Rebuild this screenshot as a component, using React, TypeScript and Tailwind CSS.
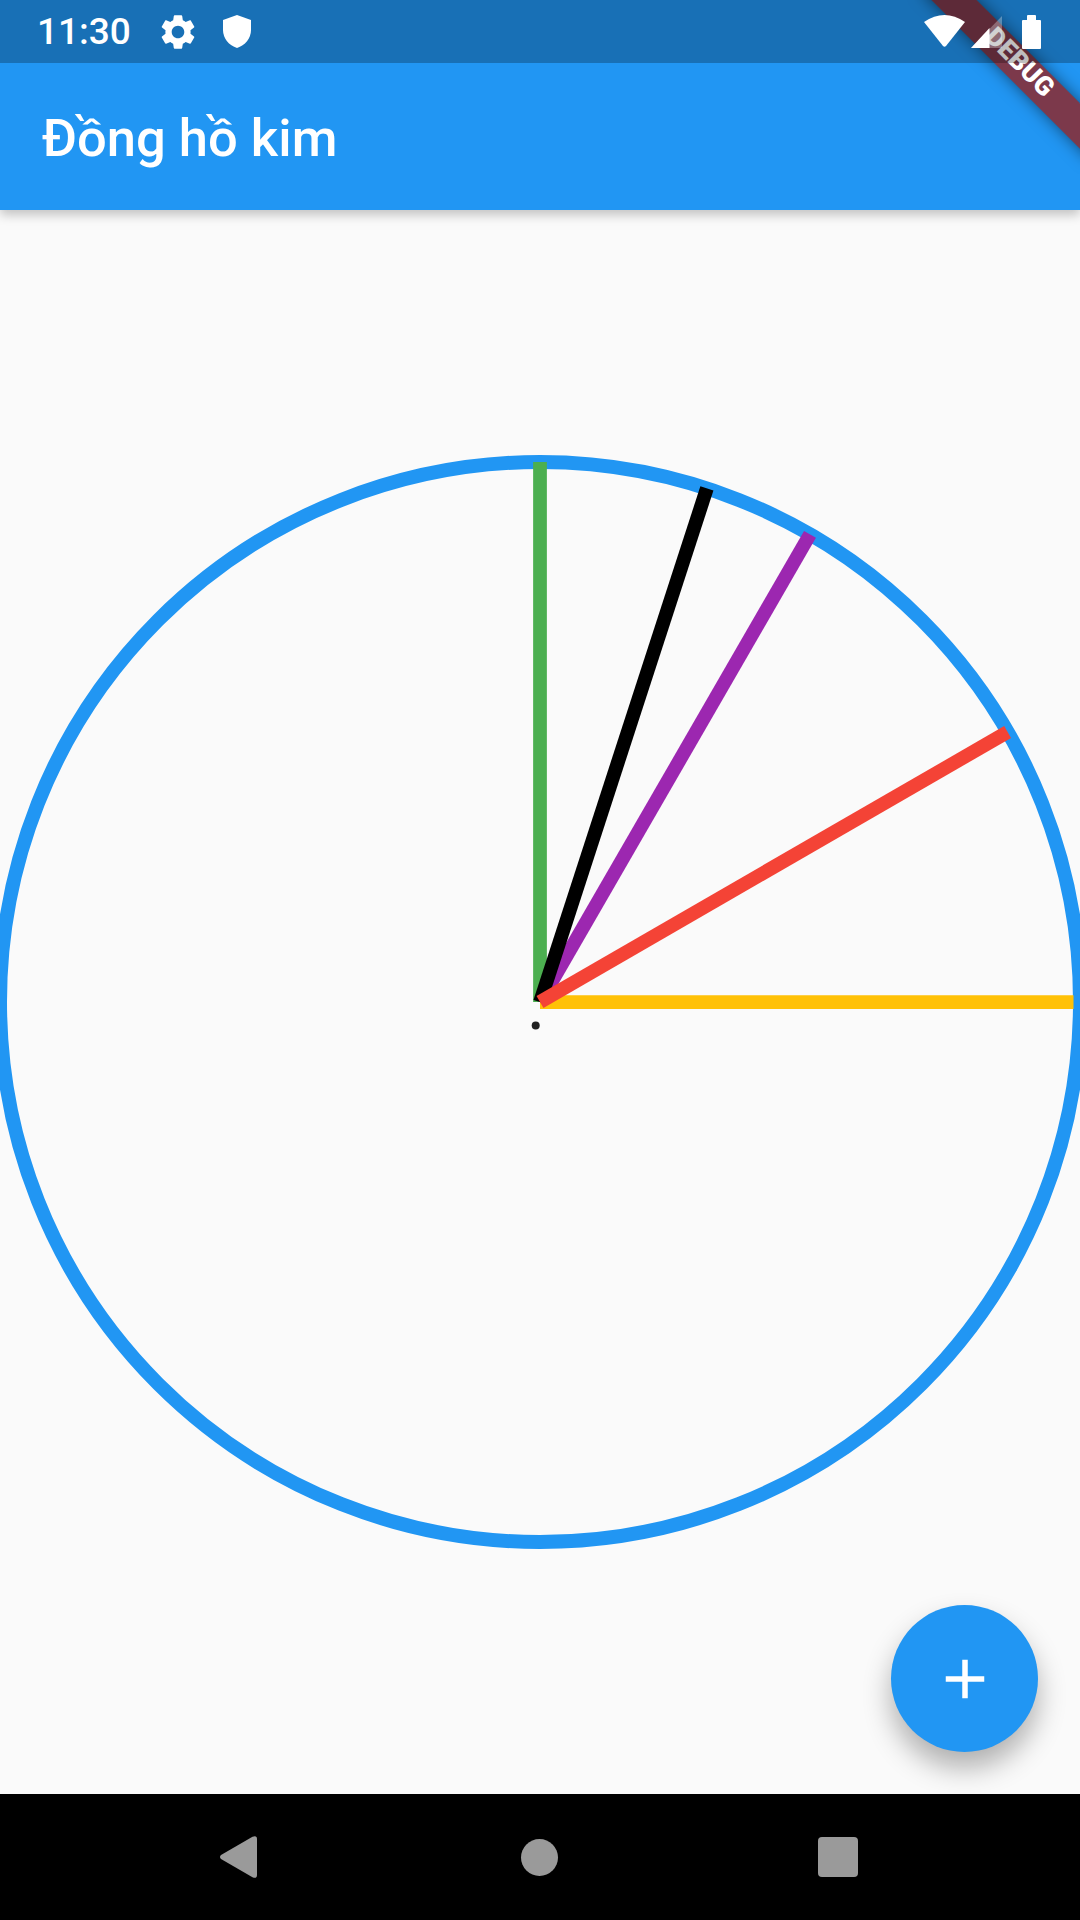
const hands = [
  { color: "#4CAF50", x: 540, y: 7 },
  { color: "#FFC107", x: 1073.5, y: 547 },
  { color: "#9C27B0", x: 810, y: 79.4 },
  { color: "#000000", x: 706.9, y: 33.4 },
  { color: "#F44336", x: 1007.6, y: 277 },
];

function ClockFace() {
  return (
    <svg width="1080" height="1094" viewBox="0 0 1080 1094" className="shrink-0">
      <circle cx="540" cy="547" r="540" fill="none" stroke="#2196F3" strokeWidth="14" />
      {hands.map((hand) => (
        <line
          key={hand.color}
          x1="540"
          y1="547"
          x2={hand.x}
          y2={hand.y}
          stroke={hand.color}
          strokeWidth="13.75"
        />
      ))}
      <circle cx="535.7" cy="570.5" r="4" fill="#212121" />
    </svg>
  );
}

// system status bar sits over the app, so the debug ribbon goes under it
function StatusBar() {
  return (
    <div className="absolute inset-x-0 top-0 z-30 flex h-[63px] items-center bg-black/25 pl-[37px] pr-[39px] text-white">
      <span className="text-[37px] font-medium leading-none">11:30</span>
      <svg width="42" height="42" viewBox="0 0 24 24" fill="white" className="ml-[26px]">
        <path d="M19.14 12.94c.04-.3.06-.61.06-.94 0-.32-.02-.64-.07-.94l2.03-1.58c.18-.14.23-.41.12-.61l-1.92-3.32c-.12-.22-.37-.29-.59-.22l-2.39.96c-.5-.38-1.03-.7-1.62-.94l-.36-2.54c-.04-.24-.24-.41-.48-.41h-3.84c-.24 0-.43.17-.47.41l-.36 2.54c-.59.24-1.13.57-1.62.94l-2.39-.96c-.22-.08-.47 0-.59.22L2.74 8.87c-.12.21-.08.47.12.61l2.03 1.58c-.05.3-.09.63-.09.94s.02.64.07.94l-2.03 1.58c-.18.14-.23.41-.12.61l1.92 3.32c.12.22.37.29.59.22l2.39-.96c.5.38 1.03.7 1.62.94l.36 2.54c.05.24.24.41.48.41h3.84c.24 0 .44-.17.47-.41l.36-2.54c.59-.24 1.13-.56 1.62-.94l2.39.96c.22.08.47 0 .59-.22l1.92-3.32c.12-.22.07-.47-.12-.61l-2.01-1.58zM12 15.6c-1.98 0-3.6-1.62-3.6-3.6s1.62-3.6 3.6-3.6 3.6 1.62 3.6 3.6-1.62 3.6-3.6 3.6z" />
      </svg>
      <svg width="28" height="33" viewBox="0 0 28 33" fill="white" className="ml-[24px]">
        <path d="M14 0 L0 5 V15 C0 23.5 6 30.5 14 33 C22 30.5 28 23.5 28 15 V5 Z" />
      </svg>
      <svg width="41" height="33" viewBox="0 0 41 33" fill="white" className="ml-auto">
        <path d="M0 7 Q20.5 -7 41 7 L22 31 Q20.5 32.5 19 31 Z" />
      </svg>
      <svg width="31" height="32" viewBox="0 0 31 32" fill="white" className="ml-[6px]">
        <path d="M0 32 L31 0 V32 Z" fillOpacity="0.3" />
        <path d="M0 32 L18.5 12 V32 Z" />
      </svg>
      <svg width="19" height="34" viewBox="0 0 19 34" fill="white" className="ml-[20px]">
        <path d="M5 1 Q5 0 6 0 H13 Q14 0 14 1 V5 H18 Q19 5 19 6 V33 Q19 34 18 34 H1 Q0 34 0 33 V6 Q0 5 1 5 H5 Z" />
      </svg>
    </div>
  );
}

function NavBar() {
  return (
    <div className="flex h-[126px] shrink-0 items-center bg-black pl-[220px]">
      <svg width="37" height="42" viewBox="0 0 37 42" fill="#9A9A9A">
        <path d="M1 23 Q-1 21 1 19 L32.5 0.7 Q37 -1 37 3 V39 Q37 43 32.5 41.3 Z" />
      </svg>
      <div className="ml-[264px] h-[37px] w-[37px] rounded-full bg-[#9A9A9A]" />
      <div className="ml-[260px] h-[40px] w-[40px] rounded-[4px] bg-[#9A9A9A]" />
    </div>
  );
}

export default function App() {
  return (
    <div
      className="relative flex h-[1920px] w-[1080px] flex-col overflow-hidden bg-[#FAFAFA]"
      style={{ fontFamily: "Roboto, sans-serif" }}
    >
      <StatusBar />
      <div className="z-10 flex h-[210px] shrink-0 items-center bg-[#2196F3] pl-[42px] pt-[67px] shadow-[0_5px_10px_rgba(0,0,0,0.22)]">
        <h1 className="text-[52.5px] font-medium leading-none text-white">Đồng hồ kim</h1>
      </div>
      <div className="relative flex min-h-0 flex-1 items-center justify-center overflow-hidden">
        <ClockFace />
        <button
          type="button"
          className="absolute bottom-[42px] right-[42px] flex h-[147px] w-[147px] items-center justify-center rounded-full bg-[#2196F3] shadow-[0_16px_28px_rgba(0,0,0,0.3)]"
        >
          <svg width="66" height="66" viewBox="0 0 24 24" fill="white">
            <path d="M19 13h-6v6h-2v-6H5v-2h6V5h2v6h6v2z" />
          </svg>
        </button>
      </div>
      <NavBar />
      <div className="absolute left-[898px] top-[48px] z-20 flex h-[32px] w-[240px] rotate-45 items-center justify-center bg-[rgba(148,34,33,0.8)] shadow-[0_0_16px_rgba(0,0,0,0.5)]">
        <span className="mb-[6px] text-[26.5px] font-black leading-none text-white">DEBUG</span>
      </div>
    </div>
  );
}
